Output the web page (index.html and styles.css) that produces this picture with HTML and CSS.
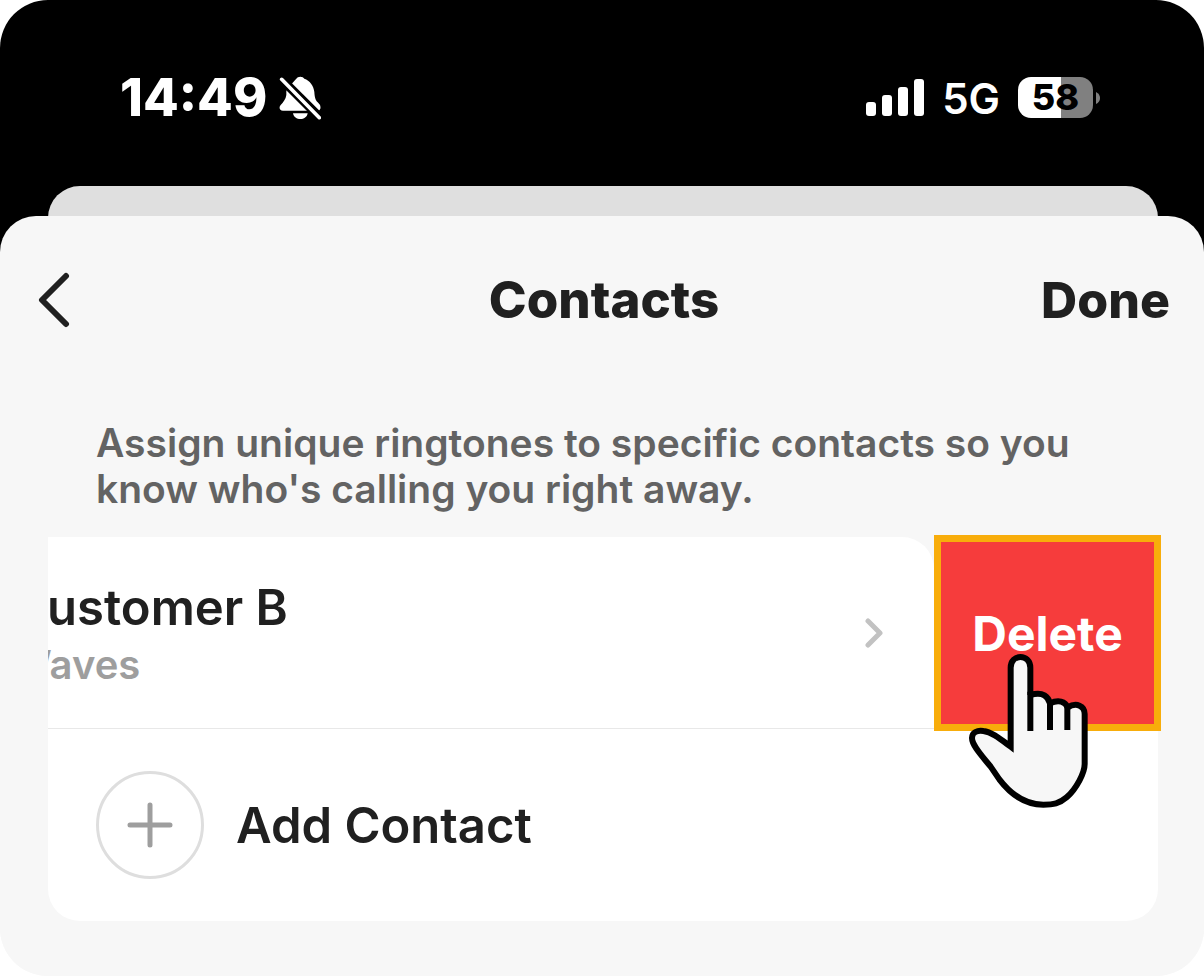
FILE: index.html
```html
<!DOCTYPE html>
<html lang="en">
<head>
<meta charset="utf-8">
<meta name="viewport" content="width=device-width, initial-scale=1">
<title>Contacts</title>
<link rel="stylesheet" href="styles.css">
</head>
<body>
<div class="phone">
  <div class="status">
    <div class="status-group">
      <time class="clock">14:49</time>
      <svg class="bell" viewBox="0 0 126 132" aria-hidden="true">
        <path fill="#fff" d="M38 24C44 16 50 10 52 8C56 0 72 0 76 8C92 14 104 28 106 48C107 64 109 72 116 79C122 85 126 89 124 98Q123 104 115 104H12C1 104-1 94 5 87C14 77 20 70 22 57V44Z"/>
        <path stroke="#000" stroke-width="27" d="M-2 0L128 130"/>
        <path fill="#fff" d="M42 112H86C83 135 45 135 42 112Z"/>
        <path stroke="#fff" stroke-width="11" stroke-linecap="round" d="M8 10L121 125"/>
      </svg>
    </div>
    <div class="status-group status-right">
      <svg class="signal" viewBox="0 0 58 37" fill="#fff" aria-hidden="true">
        <rect x="0" y="23" width="10" height="14" rx="3"/><rect x="16" y="16" width="10" height="21" rx="3"/><rect x="32" y="8" width="10" height="29" rx="3"/><rect x="48" y="0" width="10" height="37" rx="3"/>
      </svg>
      <span class="network">5G</span>
      <div class="battery"><span class="battery-level">58</span><svg class="battery-cap" viewBox="0 0 4 12" aria-hidden="true"><path fill="#808080" d="M0 0Q4 2 4 6Q4 10 0 12Z"/></svg></div>
    </div>
  </div>
  <div class="sheet-behind"></div>
  <main class="sheet">
    <header class="bar">
      <button class="back" type="button" aria-label="Back"><svg viewBox="0 0 32 56" aria-hidden="true"><path fill="none" stroke="#202020" stroke-width="6" stroke-linecap="round" stroke-linejoin="round" d="M28 4L4 28L28 52"/></svg></button>
      <h1 class="title">Contacts</h1>
      <button class="done" type="button">Done</button>
    </header>
    <p class="hint">Assign unique ringtones to specific contacts so you<br>know who's calling you right away.</p>
    <div class="list">
      <div class="swipe-row">
        <div class="swipe-clip">
          <a class="contact" href="#">
            <span class="contact-text"><span class="name">Customer B</span><span class="tone">Waves</span></span>
            <svg class="chevron" viewBox="0 0 18 30" aria-hidden="true"><path fill="none" stroke="#c2c2c2" stroke-width="5" stroke-linecap="round" stroke-linejoin="round" d="M3 3L15 15L3 27"/></svg>
          </a>
        </div>
        <div class="delete-cell">
          <button class="delete" type="button">Delete</button>
          <svg class="pointer" viewBox="24 36 366 474" aria-hidden="true">
            <path fill="#f7f7f7" stroke="#000" stroke-width="18" stroke-miterlimit="8" d="M212 165C250 153 265 172 270 190C295 178 316 184 323 202C350 186 374 198 374 222V372C374 398 350 445 320 472C298 491 280 494 250 494C195 494 150 460 118 418L92 380C70 352 36 318 36 294C36 277 52 270 70 273C96 276 121 297 152 320V83C152 40 211 40 211 83V165"/>
            <path fill="none" stroke="#000" stroke-width="18" d="M211 155V273M270 185V270M322 195V270"/>
          </svg>
        </div>
      </div>
      <button class="add" type="button">
        <svg class="plus" viewBox="0 0 108 108" fill="none" aria-hidden="true"><circle cx="54" cy="54" r="52.5" stroke="#dedede" stroke-width="3"/><path stroke="#9e9e9e" stroke-width="5" stroke-linecap="round" d="M54 34V74M34 54H74"/></svg>
        Add Contact
      </button>
    </div>
  </main>
</div>
</body>
</html>
```
FILE: styles.css
```css
* { box-sizing: border-box; }
body { margin: 0; background: #fff; color: #202020; font-family: Inter, "Liberation Sans", sans-serif; }
button { margin: 0; padding: 0; border: 0; background: none; color: inherit; font: inherit; }
svg { display: block; flex: none; }

.phone { display: flex; flex-direction: column; min-height: 100vh; overflow: hidden; background: linear-gradient(#000 50%, #f7f7f7 50%); border-radius: 48px; }

.status { display: flex; justify-content: space-between; align-items: center; padding: 66px 104px 57px 120px; color: #fff; line-height: 60px; }
.status-group { display: flex; align-items: center; gap: 12px; }
.status-right { gap: 18px; }
.clock { font-size: 52px; font-weight: 800; }
.bell { width: 42px; height: 44px; }
.signal { width: 58px; height: 37px; }
.network { padding-top: 3px; font-size: 42px; font-weight: 600; }
.battery { display: flex; align-items: center; gap: 3px; }
.battery-level { width: 75px; border-radius: 13px; background: linear-gradient(90deg, #fff 57%, #808080 57%); color: #000; font-size: 36px; font-weight: 800; line-height: 41px; text-align: center; }
.battery-cap { width: 4px; height: 12px; }

.sheet-behind { height: 66px; margin: 0 46px -36px 48px; border-radius: 32px 32px 0 0; background: #dfdfdf; }
.sheet { flex: 1; padding: 0 46px 55px 48px; border-radius: 36px 36px 0 0; background: #f7f7f7; }
.bar { display: grid; grid-template-columns: 1fr auto 1fr; align-items: center; height: 168px; margin: 0 -12px 0 -10px; }
.back { justify-self: start; }
.back svg { width: 32px; height: 56px; }
.title { margin: 0; font-size: 51px; font-weight: 800; line-height: 60px; }
.done { justify-self: end; font-size: 50px; font-weight: 800; line-height: 60px; }
.hint { margin: 0; padding: 36px 0 25px 48px; color: #636363; font-size: 39px; font-weight: 600; line-height: 46px; }

.list { border-radius: 0 0 32px 32px; background: #fff; }
.swipe-row { display: flex; height: 192px; border-bottom: 1px solid #e8e8e8; background: #f7f7f7; }
.swipe-clip { flex: 1; min-width: 0; overflow: hidden; border-radius: 0 32px 0 0; background: #fff; }
.contact { display: flex; justify-content: space-between; align-items: center; height: 100%; margin-left: -37px; padding-right: 51px; color: inherit; text-decoration: none; }
.contact-text { display: flex; flex-direction: column; padding-top: 4px; }
.name { font-size: 49px; font-weight: 600; line-height: 60px; }
.tone { color: #9e9e9e; font-size: 40px; font-weight: 600; line-height: 54px; }
.chevron { width: 18px; height: 30px; }
.delete-cell { position: relative; z-index: 1; display: flex; flex: 0 0 227px; margin: -2px -3px -3px 0; }
.delete { flex: 1; border: 7px solid #f8ad0b; background: #f63c3c; color: #fff; font-size: 48px; font-weight: 700; }
.pointer { position: absolute; top: 117px; left: 34px; width: 122px; height: 158px; }
.add { display: flex; align-items: center; gap: 32px; width: 100%; height: 192px; padding: 0 48px; font-size: 49px; font-weight: 600; text-align: left; }
.plus { width: 108px; height: 108px; }
```
